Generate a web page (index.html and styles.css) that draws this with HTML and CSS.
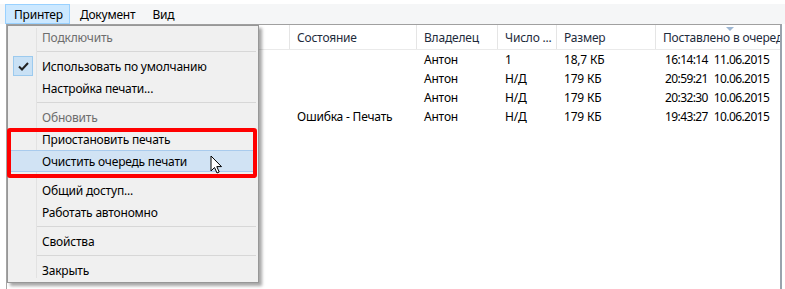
FILE: index.html
```html
<!DOCTYPE html>
<html lang="ru">
<head>
    <!-- Meta -->
    <meta charset="UTF-8">
    <meta name="viewport" content="width=device-width, initial-scale=1.0">
    <title>Очередь печати</title>
    <link rel="stylesheet" href="styles.css">
</head>
<body>
    <!-- Menubar -->
    <nav class="menubar">
        <span class="menubar-item active">Принтер</span>
        <span class="menubar-item">Документ</span>
        <span class="menubar-item">Вид</span>
    </nav>

    <!-- Window with job list -->
    <main class="window">
        <div class="jobs">
            <div class="jobs-head">
                <div class="col"></div>
                <div class="col">Состояние</div>
                <div class="col">Владелец</div>
                <div class="col">Число ...</div>
                <div class="col">Размер</div>
                <div class="col col-sorted">Поставлено в очередь</div>
            </div>
            <div class="jobs-row">
                <div class="col"></div>
                <div class="col"></div>
                <div class="col">Антон</div>
                <div class="col">1</div>
                <div class="col">18,7 КБ</div>
                <div class="col col-date"><span>16:14:14</span><span>11.06.2015</span></div>
            </div>
            <div class="jobs-row">
                <div class="col"></div>
                <div class="col"></div>
                <div class="col">Антон</div>
                <div class="col">Н/Д</div>
                <div class="col">179 КБ</div>
                <div class="col col-date"><span>20:59:21</span><span>10.06.2015</span></div>
            </div>
            <div class="jobs-row">
                <div class="col"></div>
                <div class="col"></div>
                <div class="col">Антон</div>
                <div class="col">Н/Д</div>
                <div class="col">179 КБ</div>
                <div class="col col-date"><span>20:32:30</span><span>10.06.2015</span></div>
            </div>
            <div class="jobs-row">
                <div class="col"></div>
                <div class="col">Ошибка - Печать</div>
                <div class="col">Антон</div>
                <div class="col">Н/Д</div>
                <div class="col">179 КБ</div>
                <div class="col col-date"><span>19:43:27</span><span>10.06.2015</span></div>
            </div>
        </div>
    </main>

    <!-- Dropdown menu "Принтер" -->
    <div class="dropdown">
        <div class="dd-item disabled">Подключить</div>
        <div class="dd-sep"></div>
        <div class="dd-item checked">
            <span class="dd-check">
                <svg width="11" height="9" viewBox="0 0 11 9"><path d="M1 4.5 L4 7.5 L10 1" fill="none" stroke="#222" stroke-width="2"/></svg>
            </span>
            Использовать по умолчанию
        </div>
        <div class="dd-item">Настройка печати...</div>
        <div class="dd-sep"></div>
        <div class="dd-item disabled">Обновить</div>
        <div class="dd-item">Приостановить печать</div>
        <div class="dd-item hover">Очистить очередь печати</div>
        <div class="dd-sep"></div>
        <div class="dd-item">Общий доступ...</div>
        <div class="dd-item">Работать автономно</div>
        <div class="dd-sep"></div>
        <div class="dd-item">Свойства</div>
        <div class="dd-sep"></div>
        <div class="dd-item">Закрыть</div>
    </div>

    <!-- Red annotation frame -->
    <div class="highlight-frame"></div>

    <!-- Mouse pointer -->
    <svg class="cursor" width="13" height="19" viewBox="0 0 13 19">
        <path d="M1 1 L1 16 L4.5 12.5 L7 18 L9.2 17 L6.8 11.6 L11.5 11.6 Z" fill="#fff" stroke="#000" stroke-width="1" stroke-linejoin="round"/>
    </svg>
</body>
</html>
```

FILE: styles.css
```css
* {
    margin: 0;
    padding: 0;
    box-sizing: border-box;
}

body {
    font-family: "Noto Sans", "Open Sans", sans-serif;
    font-size: 12px;
    letter-spacing: -0.2px;
    color: #000;
    background-color: #fff;
    width: 785px;
    height: 289px;
    overflow: hidden;
    padding-top: 4px;
}

/* Menubar */
.menubar {
    display: flex;
    height: 20px;
    padding-left: 5px;
    background-color: #f5f6f7;
}

.menubar-item {
    display: flex;
    align-items: center;
    padding: 0 6px 0 8px;
    border: 1px solid transparent;
    margin-right: 1px;
}

.menubar-item.active {
    background-color: #cce8ff;
    border-color: #99d1ff;
}

/* Window */
.window {
    margin: 0 3px 0 6px;
    height: 265px;
    border-top: 1px solid #a0a0a0;
    border-left: 1px solid #a5a5a5;
    border-right: 2px solid #9aa3ad;
    background-color: #fff;
    overflow: hidden;
}

.jobs-head,
.jobs-row {
    display: grid;
    grid-template-columns: 283px 127px 81px 59px 99px 200px;
}

.jobs-head {
    height: 25px;
    border-bottom: 1px solid #eaeaea;
    color: #1e2b3c;
}

.jobs-head .col {
    display: flex;
    align-items: center;
    padding-left: 7px;
    border-right: 1px solid #e5e5e5;
    white-space: nowrap;
    position: relative;
}

.col-sorted:before {
    content: '';
    position: absolute;
    top: 2px;
    left: 70px;
    border: 4px solid transparent;
    border-top: 4px solid #9db6d2;
    border-bottom: 0;
}

.jobs-row {
    height: 19px;
}

.jobs-row .col {
    display: flex;
    align-items: center;
    padding-left: 7px;
    white-space: nowrap;
}

.col-date {
    padding-left: 9px !important;
    gap: 6px;
    letter-spacing: -0.6px;
}

/* Dropdown menu */
.dropdown {
    position: absolute;
    top: 25px;
    left: 7px;
    width: 252px;
    height: 258px;
    padding: 0 2px 1px 2px;
    background-color: #f0f0f0;
    border: 1px solid #979797;
    box-shadow: 3px 3px 3px rgba(0, 0, 0, 0.35);
    background-image: linear-gradient(#e2e2e2, #e2e2e2);
    background-size: 1px calc(100% - 6px);
    background-position: 28px 2px;
    background-repeat: no-repeat;
}

.dd-item {
    position: relative;
    height: 22px;
    display: flex;
    align-items: center;
    padding-left: 31px;
    white-space: nowrap;
    border: 1px solid transparent;
}

.dd-item.disabled {
    color: #6d6d6d;
}

.dd-item.hover {
    background-color: #d1e3f4;
    border-color: #a9cbed;
}

.dd-check {
    position: absolute;
    left: 2px;
    top: 0;
    width: 20px;
    height: 20px;
    display: flex;
    align-items: center;
    justify-content: center;
    background-color: #c9e1f5;
    border: 1px solid #9ccaee;
}

.dd-sep {
    height: 7px;
    margin-left: 27px;
    background-image: linear-gradient(#d7d7d7, #d7d7d7);
    background-size: 100% 1px;
    background-position: 0 3px;
    background-repeat: no-repeat;
}

/* Annotation */
.highlight-frame {
    position: absolute;
    top: 128px;
    left: 7px;
    width: 250px;
    height: 50px;
    border: 4px solid #ff0000;
    border-radius: 3px;
}

.cursor {
    position: absolute;
    top: 155px;
    left: 210px;
}
```
